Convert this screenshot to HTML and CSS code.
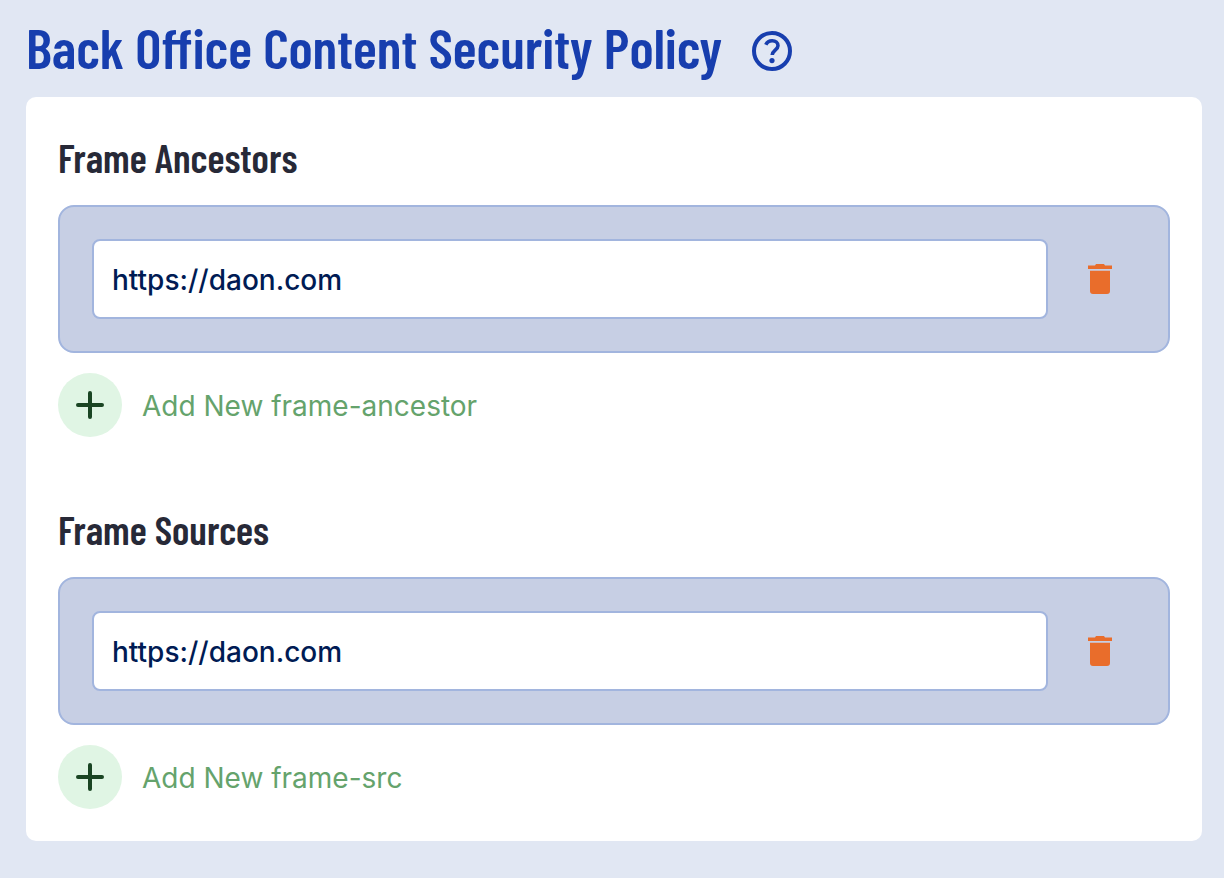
FILE: index.html
```html
<!DOCTYPE html>
<html lang="en">
<head>
  <meta charset="UTF-8" />
  <meta name="viewport" content="width=device-width, initial-scale=1.0"/>
  <title>Back Office Content Security Policy</title>
  <link rel="stylesheet" href="styles.css">
</head>
<body>

  <header class="page-header">
    <h1>Back Office Content Security Policy</h1>
    <button type="button" class="help" aria-label="Help">
      <svg width="48" height="48" viewBox="0 0 24 24" fill="currentColor">
        <circle cx="12" cy="12" r="9" fill="none" stroke="currentColor" stroke-width="2"/>
        <path d="M8.900 8.900C9.500 7.600 10.600 6.900 12.100 6.900c1.700 0 2.900 1 2.900 2.500 0 2-2.900 2.400-2.900 4.600" fill="none" stroke="currentColor" stroke-width="1.800"/>
        <circle cx="12" cy="16.800" r="1.300"/>
      </svg>
    </button>
  </header>

  <main class="card">
    <section>
      <h2><label for="frame-ancestor">Frame Ancestors</label></h2>
      <div class="entry">
        <input type="text" id="frame-ancestor" name="frame-ancestor" value="https://daon.com" />
        <button type="button" class="delete" aria-label="Delete frame-ancestor">
          <svg width="40" height="40" viewBox="0 0 40 40" fill="currentColor">
            <path d="M8 6.500h7l1-1.500h8l1 1.500h7V10H8zM10 11.700h20V32q0 3-3 3H13q-3 0-3-3z"/>
          </svg>
        </button>
      </div>
      <button type="button" class="add">
        <span class="add-icon">
          <svg width="32" height="32" viewBox="0 0 32 32" fill="none" stroke="currentColor" stroke-width="4" stroke-linecap="round">
            <path d="M16 4v24M4 16h24"/>
          </svg>
        </span>
        <span class="add-text">Add New frame-ancestor</span>
      </button>
    </section>

    <section>
      <h2><label for="frame-src">Frame Sources</label></h2>
      <div class="entry">
        <input type="text" id="frame-src" name="frame-src" value="https://daon.com" />
        <button type="button" class="delete" aria-label="Delete frame-src">
          <svg width="40" height="40" viewBox="0 0 40 40" fill="currentColor">
            <path d="M8 6.500h7l1-1.500h8l1 1.500h7V10H8zM10 11.700h20V32q0 3-3 3H13q-3 0-3-3z"/>
          </svg>
        </button>
      </div>
      <button type="button" class="add">
        <span class="add-icon">
          <svg width="32" height="32" viewBox="0 0 32 32" fill="none" stroke="currentColor" stroke-width="4" stroke-linecap="round">
            <path d="M16 4v24M4 16h24"/>
          </svg>
        </span>
        <span class="add-text">Add New frame-src</span>
      </button>
    </section>
  </main>

</body>
</html>
```
FILE: styles.css
```css
* {
  box-sizing: border-box;
}
body {
  margin: 0;
  padding: 16px 22px 36px 26px;
  font-family: Inter, sans-serif;
  background-color: #e1e7f3;
}
h1, h2 {
  margin: 0;
  font-family: "Barlow Condensed", "Roboto Condensed", "Liberation Sans Narrow", sans-serif;
  font-weight: 600;
}
button {
  padding: 0;
  border: none;
  background: none;
  font-family: inherit;
  cursor: pointer;
}
svg {
  display: block;
}
.page-header {
  display: flex;
  align-items: center;
  gap: 26px;
  padding-bottom: 12px;
  color: #173eae;
}
.page-header h1 {
  padding-bottom: 8px;
  font-size: 56px;
  line-height: 61px;
}
.help {
  color: inherit;
}
.card {
  display: flex;
  flex-direction: column;
  gap: 64px;
  padding: 32px;
  border-radius: 10px;
  background: #fff;
}
.card h2 {
  margin-bottom: 20px;
  font-size: 40px;
  line-height: 56px;
  color: #272937;
}
.entry {
  display: flex;
  align-items: center;
  gap: 16px;
  padding: 32px;
  border: 2px solid #a2b5de;
  border-radius: 16px;
  background: #c7cfe4;
}
.entry input {
  flex: 1;
  min-width: 0;
  height: 80px;
  padding: 2px 18px 0;
  border: 2px solid #a2b5de;
  border-radius: 8px;
  background: #fff;
  font-family: inherit;
  font-size: 28px;
  font-weight: 500;
  color: #001b54;
}
.delete {
  display: flex;
  justify-content: center;
  width: 72px;
  color: #e96d2b;
}
.add {
  display: flex;
  align-items: center;
  gap: 20px;
  margin-top: 20px;
  font-size: 28px;
  color: #65a36c;
}
.add-icon {
  display: flex;
  align-items: center;
  justify-content: center;
  width: 64px;
  height: 64px;
  border-radius: 50%;
  background: #e0f5e4;
  color: #1a4523;
}
.add-text {
  padding-top: 2px;
}
```
